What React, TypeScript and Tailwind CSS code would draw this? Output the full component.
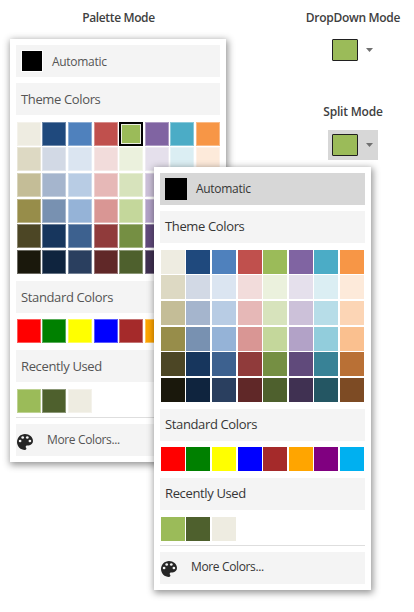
const theme: string[][] = [
  ['#eeece1', '#1f497d', '#4f81bd', '#c0504d', '#9bbb59', '#8064a2', '#4bacc6', '#f79646'],
  ['#ddd9c3', '#d2d9e5', '#dbe5f1', '#f2dcdb', '#ebf1dd', '#e5e0ec', '#dbeef3', '#fdeada'],
  ['#c4bd97', '#a5b5cd', '#b8cce4', '#e6b8b7', '#d7e3bc', '#ccc1d9', '#b7dde8', '#fcd5b5'],
  ['#978d4a', '#7891b1', '#95b3d7', '#d99694', '#c4d79b', '#b2a2c7', '#92cddc', '#fac08f'],
  ['#4c4625', '#17365d', '#3d618f', '#903b3b', '#758f43', '#604a7b', '#388296', '#b97035'],
  ['#1a180c', '#0f243e', '#2a3f5f', '#602828', '#4e602d', '#403152', '#245663', '#7d4b24'],
];
const standard = [['#ff0000', '#008000', '#ffff00', '#0000ff', '#a52a2a', '#ffa500', '#800080', '#00b0f0']];
const recent = [['#9bbb59', '#4e602d', '#eeece1']];

function Swatches({ rows, back, selected }: { rows: string[][]; back?: boolean; selected?: number }) {
  return (
    <div
      className={`grid grid-cols-[25px_26px_26px_25px_26px_25px_26px_24px] grid-rows-[25px_26px_26px_25px_26px_24px] ${
        back ? 'ml-[0.5px]' : 'ml-px'
      }`}
    >
      {rows.flat().map((color, i) => (
        <div
          key={i}
          className={`size-6 ${back ? 'shadow-[inset_0_0_0_1px_rgba(255,255,255,0.35)]' : ''} ${
            selected === i ? 'border-2 border-black p-px' : ''
          }`}
          style={{ backgroundColor: selected === i ? '#e0e6d3' : color }}
        >
          {selected === i && <div className="size-full" style={{ backgroundColor: color }} />}
        </div>
      ))}
    </div>
  );
}

function Palette() {
  return (
    <svg viewBox="0 0 16 16" className="size-4">
      <path
        fill="#252525"
        d="M8 0C3.600 0 0 3.600 0 8s3.600 8 8 8c.8 0 1.400-.6 1.400-1.400 0-.4-.1-.7-.4-.9-.2-.3-.3-.6-.3-.9 0-.8.6-1.400 1.300-1.400h1.600c2.500 0 4.400-2 4.400-4.400C16 3.200 12.400 0 8 0Z"
      />
      <g fill="#f4f4f4">
        <circle cx="3.100" cy="7" r="1.350" />
        <circle cx="5.700" cy="3.500" r="1.350" />
        <circle cx="10.300" cy="3.500" r="1.350" />
        <circle cx="12.900" cy="7" r="1.350" />
      </g>
    </svg>
  );
}

function Header({ children, back }: { children: string; back?: boolean }) {
  return (
    <div
      className={`h-8 bg-[#f4f4f4] pl-[5px] text-[13px] tracking-[-0.36px] ${
        back ? 'leading-[33px]' : 'leading-[31px]'
      }`}
    >
      {children}
    </div>
  );
}

function Panel({ back }: { back?: boolean }) {
  return (
    <div
      className={`flex h-[423px] flex-col bg-white p-1.5 shadow-[1px_2px_7px_1px_rgba(0,0,0,0.42)] ${
        back ? 'w-[216px] text-[#555]' : 'w-[217px] text-[#363636]'
      }`}
    >
      <div className={`flex h-8 shrink-0 items-center pl-[5px] text-xs ${back ? 'bg-[#f4f4f4]' : 'bg-[#d7d7d7]'}`}>
        <div className={`size-[22px] bg-black ${back ? 'border border-white' : ''}`} />
        <span className={`ml-[9px] tracking-[-0.3px] ${back ? 'pt-0.5' : ''}`}>Automatic</span>
      </div>
      <div className="mt-1.5 h-[39px]"><Header back={back}>Theme Colors</Header></div>
      <div className="h-[159px]"><Swatches rows={theme} back={back} selected={back ? 4 : undefined} /></div>
      <div className="h-[38px]"><Header back={back}>Standard Colors</Header></div>
      <div className="h-[31px]"><Swatches rows={standard} back={back} /></div>
      <div className="h-[39px]"><Header back={back}>Recently Used</Header></div>
      <div className="h-7"><Swatches rows={recent} back={back} /></div>
      <div className="h-px shrink-0 bg-[#dedede]" />
      <div className={`mt-1.5 flex h-8 shrink-0 bg-[#f4f4f4] pl-px text-xs ${back ? 'pt-2.5' : 'pt-[9px]'}`}>
        <Palette />
        <span className="-mt-[3px] ml-3.5 leading-[18px] tracking-[-0.36px]">More Colors...</span>
      </div>
    </div>
  );
}

function ColorButton({ active }: { active?: boolean }) {
  return (
    <div className={`flex h-[30px] w-[50px] items-center pl-1 ${active ? 'bg-[#d7d7d7]' : ''}`}>
      <div className="h-[22px] w-[26px] rounded-[1px] border border-[#202020] bg-[#9bbb59]" />
      <svg viewBox="0 0 7 4" className="ml-2 h-1 w-[7px]"><path d="M0 0h7L3.500 4Z" fill="#707070" /></svg>
    </div>
  );
}

export default function App() {
  return (
    <div className="relative flex h-[612px] w-[414px] overflow-hidden bg-white font-['Open_Sans','Noto_Sans',sans-serif] text-[12px] text-[#404040]">
      <div className="ml-2.5 w-[217px] pt-[9px]">
        <h2 className="h-[30px] whitespace-nowrap text-center font-semibold leading-[18px] tracking-[-0.36px]">Palette Mode</h2>
        <Panel back />
      </div>
      <div className="ml-[65px] flex w-[122px] flex-col items-center pt-[9px]">
        <h2 className="whitespace-nowrap font-semibold leading-[18px] tracking-[-0.3px]">DropDown Mode</h2>
        <div className="mt-2"><ColorButton /></div>
        <h2 className="mt-[38px] whitespace-nowrap font-semibold leading-[18px] tracking-[-0.2px]">Split Mode</h2>
        <div className="mt-[9px]"><ColorButton active /></div>
      </div>
      <div className="absolute left-[154px] top-[167px]"><Panel /></div>
    </div>
  );
}
